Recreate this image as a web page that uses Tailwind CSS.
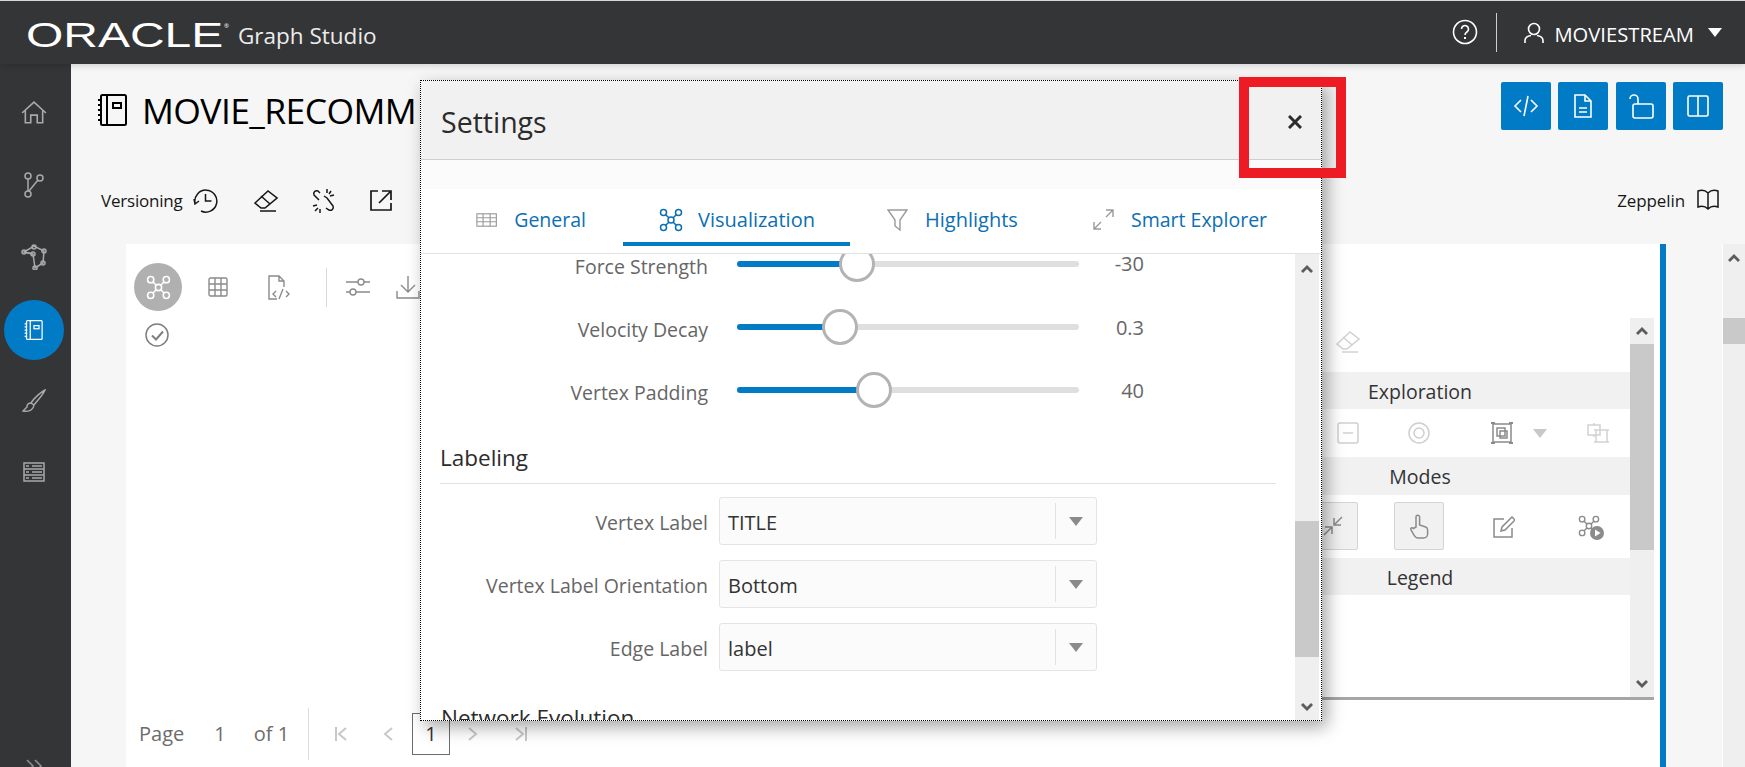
<!DOCTYPE html>
<html>
<head>
<meta charset="utf-8">
<script src="https://cdn.jsdelivr.net/npm/@tailwindcss/browser@4"></script>
</head>
<body class="font-['Open_Sans','Noto_Sans',sans-serif]">
<svg class="hidden">
  <symbol id="net" viewBox="0 0 24 24" fill="none" stroke="currentColor" stroke-width="1.5"><circle cx="4.5" cy="4.5" r="3"/><circle cx="19.5" cy="4.5" r="3"/><circle cx="4.5" cy="19.5" r="3"/><circle cx="19.5" cy="19.5" r="3"/><circle cx="12" cy="12" r="3"/><path d="M6.700 6.700 9.800 9.800M17.300 6.700 14.200 9.800M6.700 17.300 9.800 14.200M17.300 17.300 14.200 14.200"/></symbol>
  <symbol id="eraser" viewBox="0 0 24 24" fill="none" stroke="currentColor" stroke-width="1.5"><path d="M1 15 14 3l9 7-12 10H7zM7 8l9 8M6 23h16"/></symbol>
  <symbol id="nb" viewBox="0 0 30 32" fill="none" stroke="currentColor" stroke-width="2"><rect x="3" y="1" width="25" height="30" rx="1.5"/><path d="M9 1v30M0 6h4M0 11h4M0 16h4M0 21h4M0 26h4"/><rect x="15" y="9" width="8" height="5"/></symbol>
  <symbol id="up" viewBox="0 0 12 8"><path d="M0 6 6 0l6 6-2 2-4-4-4 4z" fill="currentColor"/></symbol>
</svg>
<div class="relative flex h-[767px] w-[1745px] flex-col overflow-hidden bg-[#f6f6f6]">
  <header class="relative z-10 flex h-[64px] shrink-0 items-center border-t border-[#d8d8d8] bg-[#343537] pl-[26px] pr-[23px] text-white shadow-[0_2px_6px_rgba(0,0,0,0.15)]">
    <span class="mt-[4px] inline-block w-[143px] origin-left scale-x-[1.37] font-['Liberation_Sans',sans-serif] text-[35px] leading-none">ORACLE</span>
    <span class="ml-[55px] -mt-3 text-[6px]">®</span>
    <span class="ml-[9px] mt-[7px] text-[22.500px] text-[#ececec]">Graph Studio</span>
    <div class="ml-auto flex items-center">
      <svg class="-mt-[2px] h-[26px] w-[26px]" viewBox="0 0 26 26" fill="none" stroke="white" stroke-width="1.6"><circle cx="13" cy="13" r="11.500"/><path d="M9.500 10a3.500 3.500 0 1 1 5.400 3c-1.400.9-1.900 1.500-1.900 3"/><path d="M13 18v2" stroke-width="2"/></svg>
      <div class="ml-[18px] mr-[27px] h-[39px] w-px bg-[#cfcfcf]"></div>
      <svg class="h-[22px] w-[20px]" viewBox="0 0 20 22" fill="none" stroke="white" stroke-width="1.6"><circle cx="10" cy="7" r="5.500"/><path d="M1 21v-2.500c0-3 3-4.500 6-5M19 21v-2.500c0-3-3-4.500-6-5"/></svg>
      <span class="ml-[10px] mt-[4px] text-[20.200px]">MOVIESTREAM</span>
      <span class="ml-[14px] h-0 w-0 border-x-[7px] border-t-[9px] border-x-transparent border-t-white"></span>
    </div>
  </header>

  <div class="flex min-h-0 flex-1">
    <aside class="flex w-[71px] shrink-0 flex-col items-center bg-[#343537] pt-[36px] pr-[3px] text-[#a9a9a9]">
      <svg class="h-[26px] w-[26px]" viewBox="0 0 24 24" fill="none" stroke="currentColor" stroke-width="1.5"><path d="M1 12 12 2l11 10M4 10v11h5v-7h6v7h5V10"/></svg>
      <svg class="mt-[46px] h-[26px] w-[22px]" viewBox="0 0 22 26" fill="none" stroke="currentColor" stroke-width="1.5"><circle cx="5" cy="4" r="3"/><circle cx="17" cy="6" r="3"/><circle cx="5" cy="22" r="3"/><path d="M5 7v12M15 8 6 19"/></svg>
      <svg class="mt-[46px] h-[26px] w-[26px]" viewBox="0 0 26 26" fill="none" stroke="currentColor" stroke-width="1.5"><path d="M3 8 13 2l10 5-1 12-8 5-2-14z"/><path d="M3 8l9 2"/><circle cx="3" cy="8" r="2"/><circle cx="13" cy="3" r="2"/><circle cx="23" cy="7" r="2"/><circle cx="22" cy="19" r="2"/><circle cx="14" cy="24" r="2"/><circle cx="12" cy="10" r="2"/></svg>
      <div class="mt-[30px] flex h-[60px] w-[60px] shrink-0 items-center justify-center rounded-full bg-[#027bc7] text-white">
        <svg class="h-[20px] w-[20px]"><use href="#nb"/></svg>
      </div>
      <svg class="mt-[29px] h-[24px] w-[24px]" viewBox="0 0 24 24" fill="none" stroke="currentColor" stroke-width="1.5"><path d="M23 1C19 3 12 9 9 14l3 2c3-4 9-10 11-15zM9 14c-3 0-4 2-4 4l-4 4c4 1 10 0 11-6"/></svg>
      <svg class="mt-[49px] h-[20px] w-[22px]" viewBox="0 0 22 20" fill="none" stroke="currentColor" stroke-width="1.5"><rect x="1" y="1" width="20" height="18"/><path d="M1 7h20M1 13h20M9 4h10M9 10h10M9 16h10M3 4h3M3 10h3M3 16h3"/></svg>
      <svg class="mt-auto -mb-[6px] h-[14px] w-[18px]" viewBox="0 0 18 14" fill="none" stroke="#8d8d8d" stroke-width="1.6"><path d="M2 1l6 6-6 6M10 1l6 6-6 6"/></svg>
    </aside>

    <main class="flex min-w-0 flex-1 flex-col">
      <div class="flex h-[116px] shrink-0 items-start justify-between pl-[27px] pr-[22px] pt-[18px]">
        <div class="flex items-center pt-[8px] text-black">
          <svg class="h-[32px] w-[30px]"><use href="#nb"/></svg>
          <span class="ml-[14px] text-[35.500px] leading-[40px] tracking-[-0.6px]">MOVIE_RECOMM</span>
        </div>
        <div class="flex gap-[7px] text-white">
          <div class="flex h-[48px] w-[50px] items-center justify-center rounded-[2px] bg-[#027bc7]">
            <svg class="h-[22px] w-[26px]" viewBox="0 0 26 22" fill="none" stroke="white" stroke-width="1.6"><path d="M8 5 2 11l6 6M18 5l6 6-6 6M15 1l-4 20"/></svg>
          </div>
          <div class="flex h-[48px] w-[50px] items-center justify-center rounded-[2px] bg-[#027bc7]">
            <svg class="h-[24px] w-[20px]" viewBox="0 0 20 24" fill="none" stroke="white" stroke-width="1.6"><path d="M2 1h10l6 6v16H2zM12 1v6h6M6 14h8M6 18h8"/></svg>
          </div>
          <div class="ml-[1px] flex h-[48px] w-[50px] items-center justify-center rounded-[2px] bg-[#027bc7]">
            <svg class="h-[25px] w-[25px]" viewBox="0 0 25 25" fill="none" stroke="white" stroke-width="1.6"><rect x="4" y="10" width="20" height="14" rx="2"/><path d="M1 5a4 4 0 0 1 8 0v5"/></svg>
          </div>
          <div class="flex h-[48px] w-[50px] items-center justify-center rounded-[2px] bg-[#027bc7]">
            <svg class="h-[22px] w-[22px]" viewBox="0 0 22 22" fill="none" stroke="white" stroke-width="1.6"><rect x="1" y="1" width="20" height="20" rx="1.500"/><path d="M11 1v20"/></svg>
          </div>
        </div>
      </div>

      <div class="flex h-[64px] shrink-0 items-start justify-between pl-[30px] pr-[25px] text-[#161616]">
        <div class="flex h-[40px] items-center">
          <span class="mt-[1px] text-[17px] tracking-[-0.2px]">Versioning</span>
          <svg class="ml-[10px] h-[25px] w-[25px]" viewBox="0 0 25 25" fill="none" stroke="currentColor" stroke-width="1.5"><path d="M2 15a11 11 0 1 1 6 8M12.500 6v7h6M1 11l1 5 4-3"/></svg>
          <svg class="ml-[36px] h-[24px] w-[24px]"><use href="#eraser"/></svg>
          <svg class="ml-[33px] h-[25px] w-[24px]" viewBox="0 0 24 25" fill="none" stroke="currentColor" stroke-width="1.5"><path d="M9 5 7 3a3 3 0 0 0-4 4l5 5M15 20l3 2a3 3 0 0 0 4-4l-6-8-3-2M16 1v4M20 3l-2 3M23 7l-4 1M2 18l4-1M4 23l3-3M9 25v-4"/></svg>
          <svg class="ml-[35px] h-[22px] w-[22px]" viewBox="0 0 22 22" fill="none" stroke="currentColor" stroke-width="1.7"><path d="M8 2H1v19h20v-7M9 14 20 3M12 2h9v9"/></svg>
        </div>
        <div class="flex h-[40px] items-center">
          <span class="mt-[1px] text-[17px] tracking-[-0.1px]">Zeppelin</span>
          <svg class="ml-[11px] h-[22px] w-[24px]" viewBox="0 0 24 22" fill="none" stroke="currentColor" stroke-width="1.5"><path d="M12 4C9 1 5 1 2 2v16c3-1 7-1 10 2 3-3 7-3 10-2V2c-3-1-7-1-10 2zM12 4v16"/></svg>
        </div>
      </div>

      <div class="flex min-h-0 flex-1 pl-[55px]">
        <section class="flex w-[1534px] shrink-0 justify-between bg-white">
          <div class="flex flex-col justify-between">
            <div class="pl-[8px] pt-[19px] text-[#8b8b8b]">
              <div class="flex items-center">
                <div class="flex h-[48px] w-[48px] items-center justify-center rounded-full bg-[#b0b0b0] text-white">
                  <svg class="h-[25px] w-[25px]"><use href="#net"/></svg>
                </div>
                <svg class="ml-[26px] h-[20px] w-[20px]" viewBox="0 0 20 20" fill="none" stroke="currentColor" stroke-width="1.4"><rect x="1" y="1" width="18" height="18" rx="1.500"/><path d="M7 1v18M13 1v18M1 7h18M1 13h18"/></svg>
                <svg class="ml-[40px] h-[25px] w-[22px]" viewBox="0 0 22 25" fill="none" stroke="currentColor" stroke-width="1.4"><path d="M9 24H1V1h10l5 5v6M11 1v5h5M8 16l-3 3 3 3M18 16l3 3-3 3M15 14l-4 10"/></svg>
                <div class="ml-[36px] h-[39px] w-px bg-[#d8d8d8]"></div>
                <svg class="ml-[19px] h-[18px] w-[24px]" viewBox="0 0 24 18" fill="none" stroke="currentColor" stroke-width="1.4"><path d="M0 4h12M18 4h6M0 14h4M10 14h14"/><circle cx="15" cy="4" r="3"/><circle cx="7" cy="14" r="3"/></svg>
                <svg class="ml-[26px] h-[24px] w-[24px]" viewBox="0 0 24 24" fill="none" stroke="currentColor" stroke-width="1.4"><path d="M12 1v16M5 10l7 7 7-7M1 16v7h22v-7"/></svg>
              </div>
              <svg class="ml-[11px] mt-[12px] h-[24px] w-[24px]" viewBox="0 0 24 24" fill="none" stroke="#7f7f7f" stroke-width="1.5"><circle cx="12" cy="12" r="11"/><path d="M7 12.500l4 4 7-8" stroke-width="2"/></svg>
            </div>
            <div class="mb-[7px] flex h-[52px] items-center pl-[13px] text-[20px] text-[#6c6c6c]">
              <span>Page</span>
              <span class="ml-[30px]">1</span>
              <span class="ml-[28px]">of 1</span>
              <div class="ml-[19px] h-[52px] w-px bg-[#dcdcdc]"></div>
              <svg class="ml-[25px] h-[14px] w-[14px]" viewBox="0 0 14 14" fill="none" stroke="#c8c8c8" stroke-width="2"><path d="M2 0v14M12 1 5 7l7 6"/></svg>
              <svg class="ml-[35px] h-[14px] w-[10px]" viewBox="0 0 10 14" fill="none" stroke="#c8c8c8" stroke-width="2"><path d="M9 1 2 7l7 6"/></svg>
              <div class="ml-[19px] flex h-[42px] w-[38px] shrink-0 items-center justify-center border border-[#6c6c6c] text-[#333]">1</div>
              <svg class="ml-[18px] h-[14px] w-[10px]" viewBox="0 0 10 14" fill="none" stroke="#c8c8c8" stroke-width="2"><path d="M1 1l7 6-7 6"/></svg>
              <svg class="ml-[36px] h-[14px] w-[14px]" viewBox="0 0 14 14" fill="none" stroke="#c8c8c8" stroke-width="2"><path d="M12 0v14M2 1l7 6-7 6"/></svg>
            </div>
          </div>

          <div class="mr-[6px] mt-[74px] flex h-[382px] w-[444px] flex-col border-b-[3px] border-[#a6a6a6]">
            <div class="flex min-h-0 flex-1">
              <div class="w-[420px] shrink-0 text-[19.500px] text-[#333]">
                <div class="flex h-[54px] items-center pb-[8px] pl-[126px] text-[#d2d2d2]"><svg class="h-[24px] w-[24px]"><use href="#eraser"/></svg></div>
                <div class="flex h-[37px] items-center justify-center bg-[#f1f1f1] pt-[2px]">Exploration</div>
                <div class="flex h-[48px] items-center pl-[127px]">
                  <svg class="h-[22px] w-[22px]" viewBox="0 0 22 22" fill="none" stroke="#cfcfcf" stroke-width="1.5"><rect x="1" y="1" width="20" height="20" rx="2"/><path d="M6 11h10"/></svg>
                  <svg class="ml-[49px] h-[22px] w-[22px]" viewBox="0 0 22 22" fill="none" stroke="#cfcfcf" stroke-width="1.5"><circle cx="11" cy="11" r="10"/><circle cx="11" cy="11" r="5"/></svg>
                  <svg class="ml-[61px] h-[22px] w-[22px]" viewBox="0 0 22 22" fill="none" stroke="#8b8b8b" stroke-width="1.500"><path d="M2 2h18v18H2z"/><path d="M6 6h8v8H6zM9 9h7v7H9z"/><path d="M0 1h4M18 1h4M0 21h4M18 21h4" stroke-width="2"/></svg>
                  <span class="ml-[20px] h-0 w-0 border-x-[7px] border-t-[9px] border-x-transparent border-t-[#c8c8c8]"></span>
                  <svg class="ml-[40px] h-[22px] w-[22px]" viewBox="0 0 22 22" fill="none" stroke="#d2d2d2" stroke-width="1.5"><path d="M1 3h12v10H1zM7 3V1M7 13v2"/><path d="M9 8h11v12H9zM7 8h4M18 8h4M7 20h4M18 20h4" /></svg>
                </div>
                <div class="flex h-[38px] items-center justify-center bg-[#f1f1f1] pt-[2px]">Modes</div>
                <div class="flex h-[63px] items-start pl-[98px] pt-[7px] text-[#8b8b8b]">
                  <div class="flex h-[48px] w-[50px] items-center justify-center rounded-[2px] border border-[#d4d4d4] bg-[#f1f1f1]">
                    <svg class="h-[22px] w-[22px]" viewBox="0 0 22 22" fill="none" stroke="currentColor" stroke-width="1.5"><path d="M20 2 12 10M12 3v7h7M2 20l8-8M3 12h7v7"/></svg>
                  </div>
                  <div class="ml-[36px] flex h-[48px] w-[50px] items-center justify-center rounded-[2px] border border-[#d4d4d4] bg-[#f1f1f1]">
                    <svg class="h-[25px] w-[20px]" viewBox="0 0 20 25" fill="none" stroke="currentColor" stroke-width="1.5"><path d="M7 13V3a1.800 1.800 0 0 1 3.600 0v8l6 2c1.500.5 2 1.500 2 3v4c0 2-1.500 4-4 4H9c-2 0-3-1-4-3l-3-5c-1-2 1-3 2.500-1.500z"/></svg>
                  </div>
                  <svg class="ml-[49px] mt-[14px] h-[22px] w-[22px]" viewBox="0 0 22 22" fill="none" stroke="currentColor" stroke-width="1.5"><path d="M11 3H1v18h18v-9M8 15l1-4L19 1l3 3-10 10z"/></svg>
                  <div class="relative ml-[63px] mt-[13px] h-[24px] w-[24px]">
                    <svg class="h-[22px] w-[22px]"><use href="#net"/></svg>
                    <svg class="absolute left-[12px] top-[11px] h-[14px] w-[14px]" viewBox="0 0 14 14"><circle cx="7" cy="7" r="7" fill="#8b8b8b"/><path d="M5 3.500v7l5.500-3.500z" fill="white"/></svg>
                  </div>
                </div>
                <div class="flex h-[37px] items-center justify-center bg-[#f1f1f1] pt-[2px]">Legend</div>
              </div>
              <div class="flex w-[24px] shrink-0 flex-col bg-[#efefef] text-[#5c5c5c]">
                <div class="flex h-[26px] items-center justify-center"><svg class="h-[8px] w-[12px]"><use href="#up"/></svg></div>
                <div class="h-[206px] bg-[#c9c9c9]"></div>
                <div class="mt-auto flex h-[26px] items-center justify-center"><svg class="h-[8px] w-[12px] rotate-180"><use href="#up"/></svg></div>
              </div>
            </div>
          </div>
        </section>
        <div class="w-[6px] shrink-0 bg-[#027bc7]"></div>
        <div class="ml-[56px] flex w-[23px] shrink-0 flex-col border-l border-white bg-[#efefef] text-[#5c5c5c]">
          <div class="flex h-[28px] items-center justify-center"><svg class="h-[8px] w-[12px]"><use href="#up"/></svg></div>
          <div class="mt-[46px] h-[26px] bg-[#c9c9c9]"></div>
        </div>
      </div>
    </main>
  </div>

  <div class="absolute left-[420px] top-[80px] z-20 flex h-[641px] w-[902px] flex-col border border-dotted border-black bg-white shadow-[5px_6px_16px_rgba(0,0,0,0.35)]">
    <div class="flex h-[79px] shrink-0 items-center justify-between border-b border-[#d0d0d0] bg-[#f1f1f1] pl-[20px] pr-[19px] pt-[4px]">
      <span class="text-[28.500px] text-[#2c2c2c]">Settings</span>
      <svg class="h-[14px] w-[14px]" viewBox="0 0 14 14" stroke="#2c2c2c" stroke-width="3"><path d="M1 1l12 12M13 1 1 13"/></svg>
    </div>
    <div class="h-[29px] shrink-0 bg-[#fbfbfb]"></div>
    <div class="flex h-[65px] shrink-0 items-start border-b border-[#e2e2e2] text-[19.500px] text-[#0b6fb5]">
      <div class="ml-[55px] flex h-[53px] w-[110px] items-center pt-[8px]">
        <svg class="h-[16px] w-[24px]" viewBox="0 0 24 16" fill="none" stroke="#9a9a9a" stroke-width="1.3"><rect x="1" y="1" width="22" height="14"/><path d="M1 5.500h22M1 10h22M8 1v14M16 1v14"/></svg>
        <span class="ml-[17px]">General</span>
      </div>
      <div class="ml-[37px] flex h-[57px] w-[227px] items-center border-b-4 border-[#027bc7] pl-[36px] pt-[8px]">
        <svg class="h-[24px] w-[24px]"><use href="#net"/></svg>
        <span class="ml-[15px] text-[20px]">Visualization</span>
      </div>
      <div class="flex h-[53px] w-[206px] items-center pl-[37px] pt-[8px]">
        <svg class="h-[22px] w-[21px]" viewBox="0 0 21 22" fill="none" stroke="#9a9a9a" stroke-width="1.4"><path d="M1 1h19l-7 10v10l-5-4v-6z"/></svg>
        <span class="ml-[17px] text-[20px]">Highlights</span>
      </div>
      <div class="ml-[37px] flex h-[53px] items-center pt-[8px]">
        <svg class="h-[21px] w-[21px]" viewBox="0 0 21 21" fill="none" stroke="#9a9a9a" stroke-width="1.4"><path d="M13 8l7-7M13 1h7v7M8 13l-7 7M1 13v7h7"/></svg>
        <span class="ml-[17px]">Smart Explorer</span>
      </div>
    </div>
    <div class="flex min-h-0 flex-1">
      <div class="min-w-0 flex-1 overflow-hidden text-[19.500px] leading-[24px] text-[#666]">
        <div class="-mt-[22px] flex h-[63px] items-center">
          <span class="mt-[6px] w-[287px] text-right">Force Strength</span>
          <div class="relative ml-[29px] h-[6px] w-[342px] rounded-full bg-[#dfdfdf]">
            <div class="h-full w-[120px] rounded-full bg-[#027bc7]"></div>
            <div class="absolute left-[102px] top-[-15px] h-[36px] w-[36px] rounded-full border-[3px] border-[#b3b3b3] bg-white"></div>
          </div>
          <span class="w-[65px] text-right text-[20px] leading-[18px]">-30</span>
        </div>
        <div class="flex h-[63px] items-center">
          <span class="mt-[6px] w-[287px] text-right">Velocity Decay</span>
          <div class="relative ml-[29px] h-[6px] w-[342px] rounded-full bg-[#dfdfdf]">
            <div class="h-full w-[103px] rounded-full bg-[#027bc7]"></div>
            <div class="absolute left-[85px] top-[-15px] h-[36px] w-[36px] rounded-full border-[3px] border-[#b3b3b3] bg-white"></div>
          </div>
          <span class="mt-[2px] w-[65px] text-right text-[20px] leading-[18px]">0.3</span>
        </div>
        <div class="flex h-[63px] items-center">
          <span class="mt-[6px] w-[287px] text-right">Vertex Padding</span>
          <div class="relative ml-[29px] h-[6px] w-[342px] rounded-full bg-[#dfdfdf]">
            <div class="h-full w-[137px] rounded-full bg-[#027bc7]"></div>
            <div class="absolute left-[119px] top-[-15px] h-[36px] w-[36px] rounded-full border-[3px] border-[#b3b3b3] bg-white"></div>
          </div>
          <span class="mt-[2px] w-[65px] text-right text-[20px] leading-[18px]">40</span>
        </div>
        <div class="ml-[19px] flex h-[63px] w-[836px] items-end border-b border-[#e2e2e2] pb-[13px] text-[22.500px] text-[#2c2c2c]">Labeling</div>
        <div class="mt-[13px] flex h-[48px] items-center">
          <span class="mt-[4px] w-[287px] text-right">Vertex Label</span>
          <div class="ml-[11px] flex h-[48px] w-[378px] items-center rounded-[3px] border border-[#e4e4e4] bg-[#fbfbfb] pl-[8px] text-[20px] text-[#333]">
            <span class="mt-[4px] flex-1">TITLE</span>
            <div class="h-[36px] w-px bg-[#e2e2e2]"></div>
            <span class="mx-[13px] h-0 w-0 border-x-[7px] border-t-[9px] border-x-transparent border-t-[#8b8b8b]"></span>
          </div>
        </div>
        <div class="mt-[15px] flex h-[48px] items-center">
          <span class="mt-[4px] w-[287px] text-right">Vertex Label Orientation</span>
          <div class="ml-[11px] flex h-[48px] w-[378px] items-center rounded-[3px] border border-[#e4e4e4] bg-[#fbfbfb] pl-[8px] text-[20px] text-[#333]">
            <span class="mt-[4px] flex-1">Bottom</span>
            <div class="h-[36px] w-px bg-[#e2e2e2]"></div>
            <span class="mx-[13px] h-0 w-0 border-x-[7px] border-t-[9px] border-x-transparent border-t-[#8b8b8b]"></span>
          </div>
        </div>
        <div class="mt-[15px] flex h-[48px] items-center">
          <span class="mt-[4px] w-[287px] text-right">Edge Label</span>
          <div class="ml-[11px] flex h-[48px] w-[378px] items-center rounded-[3px] border border-[#e4e4e4] bg-[#fbfbfb] pl-[8px] text-[20px] text-[#333]">
            <span class="mt-[4px] flex-1">label</span>
            <div class="h-[36px] w-px bg-[#e2e2e2]"></div>
            <span class="mx-[13px] h-0 w-0 border-x-[7px] border-t-[9px] border-x-transparent border-t-[#8b8b8b]"></span>
          </div>
        </div>
        <div class="ml-[20px] mt-[32px] text-[22.500px] leading-[30px] text-[#2c2c2c]">Network Evolution</div>
      </div>
      <div class="mr-[2px] flex w-[24px] shrink-0 flex-col bg-[#efefef] text-[#5c5c5c]">
        <div class="flex h-[30px] items-center justify-center"><svg class="h-[8px] w-[12px]"><use href="#up"/></svg></div>
        <div class="mt-[237px] h-[136px] bg-[#c9c9c9]"></div>
        <div class="mt-auto flex h-[26px] items-center justify-center"><svg class="h-[8px] w-[12px] rotate-180"><use href="#up"/></svg></div>
      </div>
    </div>
  </div>

  <div class="absolute left-[1239px] top-[77px] z-30 h-[101px] w-[107px] border-[10px] border-[#ed1c24]"></div>
</div>
</body>
</html>
